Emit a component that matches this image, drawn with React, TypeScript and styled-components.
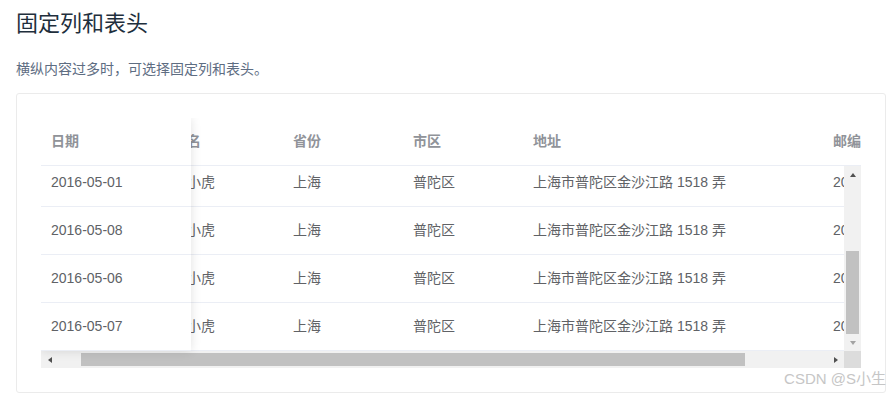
import { useLayoutEffect, useRef } from 'react';
import styled, { createGlobalStyle } from 'styled-components';

const GlobalStyle = createGlobalStyle`
  html, body {
    margin: 0;
    background: #fff;
    font-family: "Liberation Sans", "Noto Sans CJK SC", sans-serif;
  }
`;

const COLS = [150, 120, 120, 120, 300, 120];
const TABLE_W = 820;
const TABLE_H = 250;
const HEAD_H = 48;
const ROW_H = 48;
const BAR = 17;

const rows = ['2016-05-03', '2016-05-02', '2016-05-04', '2016-05-01', '2016-05-08', '2016-05-06', '2016-05-07'].map(
  (date) => ({
    date,
    name: '王小虎',
    province: '上海',
    city: '普陀区',
    address: '上海市普陀区金沙江路 1518 弄',
    zip: '200333',
  })
);

const Page = styled.div`
  position: relative;
  height: 395px;
  overflow: hidden;
  padding: 8px 0 0 16px;
  box-sizing: border-box;
`;

const Title = styled.h3`
  margin: 0;
  font-size: 22px;
  line-height: 32px;
  font-weight: 400;
  color: #1f2f3d;
`;

const Desc = styled.p`
  margin: 18px 0 13px;
  font-size: 14px;
  line-height: 22px;
  color: #5e6d82;
`;

const DemoBlock = styled.div`
  width: 870px;
  box-sizing: border-box;
  border: 1px solid #ebebeb;
  border-radius: 3px;
  padding: 24px;
`;

const TableBox = styled.div`
  position: relative;
  width: ${TABLE_W}px;
  height: ${TABLE_H}px;
  overflow: hidden;
  font-size: 14px;
`;

const HeaderWrap = styled.div`
  height: ${HEAD_H}px;
  overflow: hidden;
`;

const Row = styled.div<{ $cols: number[] }>`
  display: grid;
  grid-template-columns: ${({ $cols }) => $cols.map((c) => `${c}px`).join(' ')};
  width: ${({ $cols }) => $cols.reduce((a, b) => a + b, 0)}px;
`;

const Cell = styled.div<{ $head?: boolean }>`
  height: ${ROW_H - 1}px;
  line-height: ${ROW_H - 1}px;
  padding: 0 10px;
  border-bottom: 1px solid #ebeef5;
  white-space: nowrap;
  overflow: hidden;
  color: ${({ $head }) => ($head ? '#909399' : '#606266')};
  font-weight: ${({ $head }) => ($head ? 700 : 400)};
  background: #fff;
`;

const BodyArea = styled.div`
  display: flex;
  height: ${TABLE_H - HEAD_H - BAR}px;
`;

const BodyViewport = styled.div`
  width: ${TABLE_W - BAR}px;
  overflow: hidden;
`;

const VBar = styled.div`
  width: ${BAR}px;
  background: #f1f1f1;
  display: flex;
  flex-direction: column;
`;

const HBar = styled.div`
  width: ${TABLE_W - BAR}px;
  background: #f1f1f1;
  display: flex;
`;

const BottomBar = styled.div`
  display: flex;
  height: ${BAR}px;
`;

const Corner = styled.div`
  width: ${BAR}px;
  background: #dcdcdc;
`;

const ArrowBox = styled.div`
  width: ${BAR}px;
  height: ${BAR}px;
  flex: none;
  display: flex;
  align-items: center;
  justify-content: center;
`;

const Triangle = styled.div<{ $dir: 'up' | 'down' | 'left' | 'right'; $off?: boolean }>`
  width: 0;
  height: 0;
  ${({ $dir, $off }) => {
    const c = $off ? '#a3a3a3' : '#505050';
    if ($dir === 'up') return `border-left: 3.5px solid transparent; border-right: 3.5px solid transparent; border-bottom: 4px solid ${c};`;
    if ($dir === 'down') return `border-left: 3.5px solid transparent; border-right: 3.5px solid transparent; border-top: 4px solid ${c};`;
    if ($dir === 'left') return `border-top: 3.5px solid transparent; border-bottom: 3.5px solid transparent; border-right: 4px solid ${c};`;
    return `border-top: 3.5px solid transparent; border-bottom: 3.5px solid transparent; border-left: 4px solid ${c};`;
  }}
`;

const VTrack = styled.div`
  flex: 1;
  display: flex;
  flex-direction: column;
`;

const HTrack = styled.div`
  flex: 1;
  display: flex;
  align-items: center;
`;

const Thumb = styled.div<{ $vertical?: boolean }>`
  background: #c1c1c1;
  ${({ $vertical }) => ($vertical ? 'margin: 0 2px; width: 13px;' : 'height: 13px;')}
`;

const FixedPane = styled.div`
  position: absolute;
  left: 0;
  top: 0;
  bottom: ${BAR}px;
  width: ${COLS[0]}px;
  background: #fff;
  box-shadow: 0 0 10px rgba(0, 0, 0, 0.12);
`;

const FixedBody = styled.div`
  height: ${TABLE_H - HEAD_H - BAR}px;
  overflow: hidden;
`;

const Watermark = styled.div`
  position: absolute;
  right: 4px;
  top: 369px;
  font-size: 15px;
  line-height: 20px;
  color: #c6c6c6;
  white-space: nowrap;
`;

const headers = ['日期', '姓名', '省份', '市区', '地址', '邮编'];

const App = () => {
  const headRef = useRef<HTMLDivElement>(null);
  const bodyRef = useRef<HTMLDivElement>(null);
  const fixedRef = useRef<HTMLDivElement>(null);

  const scrollLeft = 28;
  const contentW = COLS.reduce((a, b) => a + b, 0);
  const viewW = TABLE_W - BAR;
  const viewH = TABLE_H - HEAD_H - BAR;
  const contentH = rows.length * ROW_H;
  const scrollTop = contentH - viewH;

  const hTrack = viewW - BAR * 2;
  const hThumb = Math.round((viewW / contentW) * hTrack);
  const hOffset = Math.round((scrollLeft / (contentW - viewW)) * (hTrack - hThumb));
  const vTrack = viewH - BAR * 2;
  const vThumb = Math.round((viewH / contentH) * vTrack);
  const vOffset = Math.round((scrollTop / (contentH - viewH)) * (vTrack - vThumb));

  useLayoutEffect(() => {
    if (headRef.current) headRef.current.scrollLeft = scrollLeft;
    if (bodyRef.current) {
      bodyRef.current.scrollLeft = scrollLeft;
      bodyRef.current.scrollTop = scrollTop;
    }
    if (fixedRef.current) fixedRef.current.scrollTop = scrollTop;
  }, [scrollTop]);

  return (
    <Page>
      <GlobalStyle />
      <Title>固定列和表头</Title>
      <Desc>横纵内容过多时，可选择固定列和表头。</Desc>
      <DemoBlock>
        <TableBox>
          <HeaderWrap ref={headRef}>
            <Row $cols={[...COLS, BAR]}>
              {headers.map((h) => (
                <Cell $head key={h}>
                  {h}
                </Cell>
              ))}
              <Cell $head />
            </Row>
          </HeaderWrap>
          <BodyArea>
            <BodyViewport ref={bodyRef}>
              {rows.map((r, i) => (
                <Row $cols={COLS} key={i}>
                  <Cell>{r.date}</Cell>
                  <Cell>{r.name}</Cell>
                  <Cell>{r.province}</Cell>
                  <Cell>{r.city}</Cell>
                  <Cell>{r.address}</Cell>
                  <Cell>{r.zip}</Cell>
                </Row>
              ))}
            </BodyViewport>
            <VBar>
              <ArrowBox>
                <Triangle $dir="up" />
              </ArrowBox>
              <VTrack>
                <Thumb $vertical style={{ height: vThumb, marginTop: vOffset }} />
              </VTrack>
              <ArrowBox>
                <Triangle $dir="down" $off />
              </ArrowBox>
            </VBar>
          </BodyArea>
          <BottomBar>
            <HBar>
              <ArrowBox>
                <Triangle $dir="left" />
              </ArrowBox>
              <HTrack>
                <Thumb style={{ width: hThumb, marginLeft: hOffset }} />
              </HTrack>
              <ArrowBox>
                <Triangle $dir="right" />
              </ArrowBox>
            </HBar>
            <Corner />
          </BottomBar>
          <FixedPane>
            <Row $cols={[COLS[0]]}>
              <Cell $head>日期</Cell>
            </Row>
            <FixedBody ref={fixedRef}>
              {rows.map((r, i) => (
                <Row $cols={[COLS[0]]} key={i}>
                  <Cell>{r.date}</Cell>
                </Row>
              ))}
            </FixedBody>
          </FixedPane>
        </TableBox>
      </DemoBlock>
      <Watermark>CSDN @S小生</Watermark>
    </Page>
  );
};

export default App;
